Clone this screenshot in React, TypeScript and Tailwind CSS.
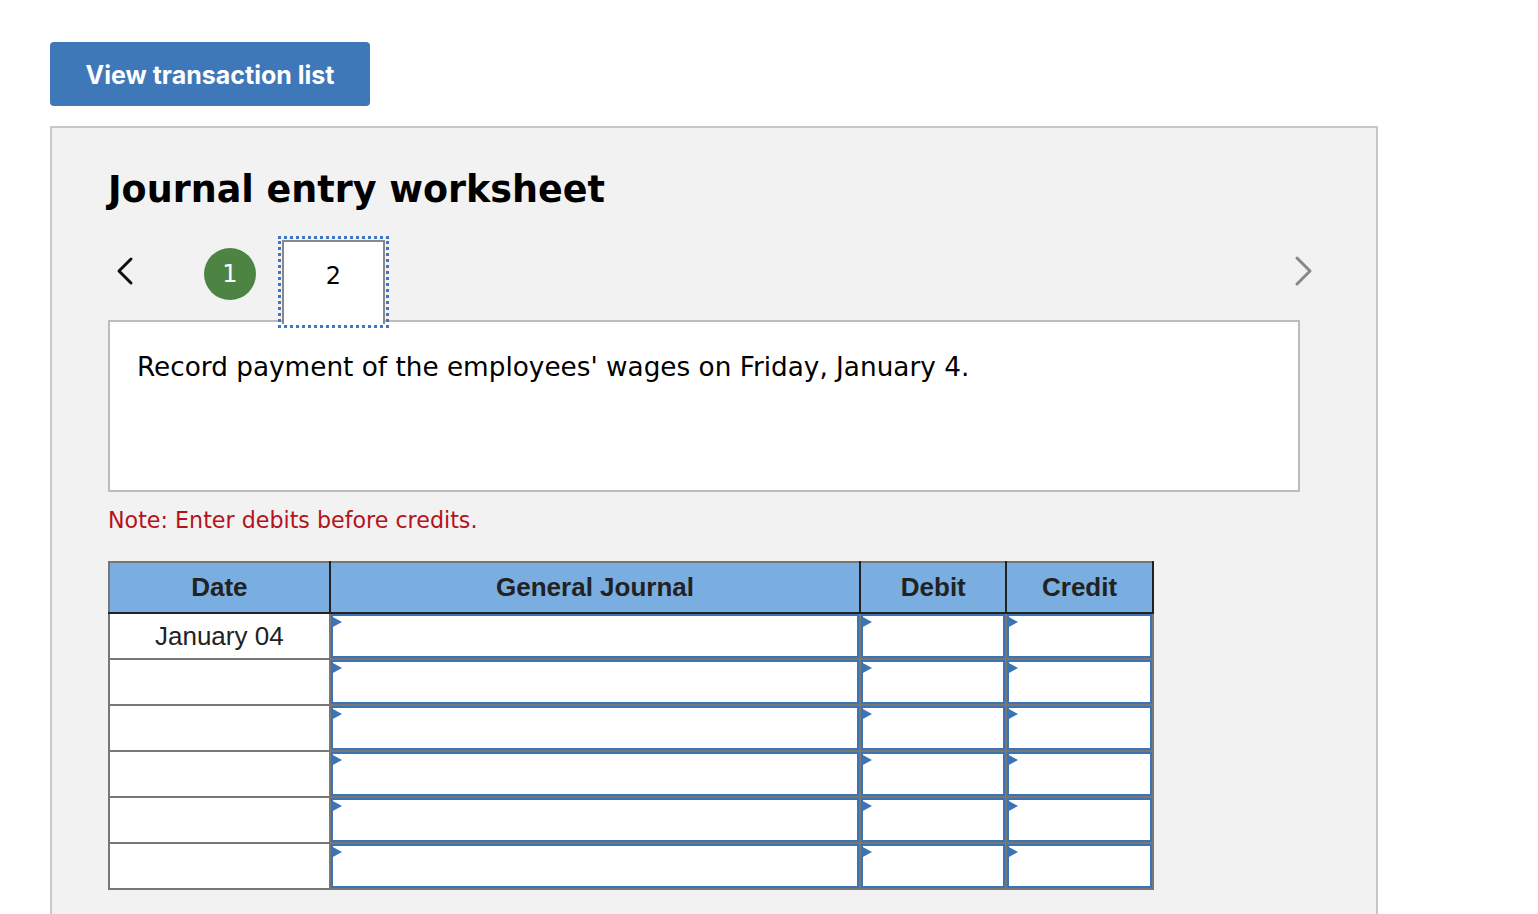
import React from "react";

const rows = ["January 04", "", "", "", "", ""];

function Flag() {
  return (
    <span className="absolute left-[-2px] top-0 h-0 w-0 border-y-[6px] border-l-[11px] border-y-transparent border-l-[#3c73b4]" />
  );
}

function InputCell() {
  return (
    <td className="h-[46px] border-2 border-[#777] p-0">
      <div className="relative h-full w-full border-2 border-[#3c73b4] bg-white">
        <Flag />
      </div>
    </td>
  );
}

export default function App() {
  return (
    <div className="min-h-screen bg-white pl-[50px] pt-[42px] font-['DejaVu_Sans',sans-serif]">
      <button className="flex h-[64px] w-[320px] items-center justify-center rounded-[4px] bg-[#3e78b8] pt-[4px] font-['Inter',sans-serif] text-[25px] font-bold text-white">
        View transaction list
      </button>

      <div className="mt-[20px] h-[800px] w-[1328px] border-2 border-[#c8c8c8] bg-[#f2f2f2] pl-[56px] pt-[42px]">
        <h1 className="text-[36.5px] leading-[40px] font-bold text-black">
          Journal entry worksheet
        </h1>

        <div className="mt-[30px] flex w-[1212px] items-start">
          <svg
            width="22"
            height="30"
            viewBox="0 0 22 30"
            className="ml-[5px] mt-[16px]"
          >
            <polyline
              points="18,3 6,15 18,27"
              fill="none"
              stroke="#111"
              strokeWidth="3"
              strokeLinecap="round"
              strokeLinejoin="round"
            />
          </svg>
          <div className="ml-[69px] mt-[8px] flex h-[52px] w-[52px] items-center justify-center rounded-full bg-[#4e8443] text-[24px] text-white">
            1
          </div>
          <div className="relative z-10 ml-[26px] -mb-[4px] flex h-[84px] w-[103px] items-start justify-center border-x-2 border-t-2 border-[#888] bg-white pt-[16px] text-[24px] text-black outline-dotted outline-[3px] outline-offset-[1px] outline-[#3d78c0]">
            2
          </div>
          <svg
            width="22"
            height="34"
            viewBox="0 0 22 34"
            className="ml-auto mr-[5px] mt-[14px]"
          >
            <polyline
              points="4,4 17,17 4,30"
              fill="none"
              stroke="#888"
              strokeWidth="3"
              strokeLinecap="round"
              strokeLinejoin="round"
            />
          </svg>
        </div>

        <div className="h-[172px] w-[1192px] border-2 border-[#bcbcbc] bg-white pl-[27px] pt-[27px]">
          <p className="text-[26.3px] leading-[36px] text-black">
            Record payment of the employees' wages on Friday, January 4.
          </p>
        </div>

        <p className="mt-[14px] text-[22.2px] leading-[28px] text-[#b5121b]">
          Note: Enter debits before credits.
        </p>

        <table className="mt-[27px] w-[1046px] border-collapse border-2 border-[#777] font-['Liberation_Sans',Arial,sans-serif]">
          <colgroup>
            <col className="w-[221px]" />
            <col className="w-[532px]" />
            <col className="w-[146px]" />
            <col className="w-[147px]" />
          </colgroup>
          <thead>
            <tr className="h-[51px] bg-[#7aaee0] text-[26px] font-bold text-[#222]">
              <th className="border-2 border-b-[#222] border-l-[#777] border-r-[#222] border-t-[#777]">
                Date
              </th>
              <th className="border-2 border-b-[#222] border-r-[#222] border-t-[#777]">
                General Journal
              </th>
              <th className="border-2 border-b-[#222] border-r-[#222] border-t-[#777]">
                Debit
              </th>
              <th className="border-2 border-b-[#222] border-r-[#222] border-t-[#777]">
                Credit
              </th>
            </tr>
          </thead>
          <tbody>
            {rows.map((d, i) => (
              <tr key={i}>
                <td className="h-[46px] border-2 border-[#777] bg-white p-0 text-center text-[26px] text-[#222]">
                  {d}
                </td>
                <InputCell />
                <InputCell />
                <InputCell />
              </tr>
            ))}
          </tbody>
        </table>
      </div>
    </div>
  );
}
